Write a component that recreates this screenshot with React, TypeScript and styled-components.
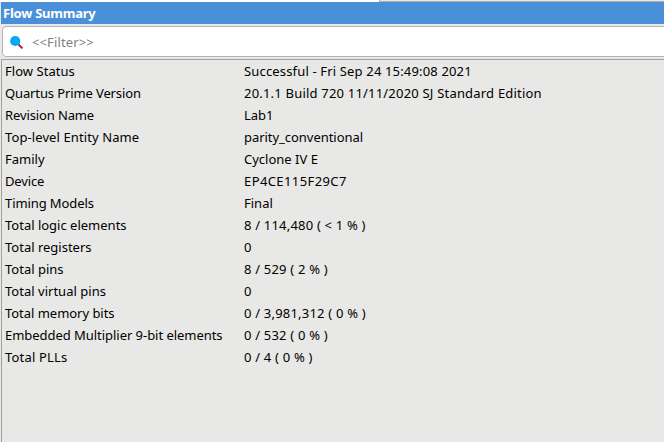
import React from "react";
import styled, { createGlobalStyle } from "styled-components";

const Global = createGlobalStyle`
  * { box-sizing: border-box; }
  body { margin: 0; overflow: hidden; background: #e8e8e6; font-family: "Noto Sans", sans-serif; font-size: 13px; color: #000; }
`;
const Panel = styled.main`
  display: flex; flex-direction: column; width: 664px; height: 442px; background: #e8e8e6; overflow: hidden;
`;
const TopEdge = styled.div`
  display: flex; justify-content: flex-end; height: 2px; flex: none; background: #fff;
`;
const TabEdge = styled.div`
  width: 285px; background: #e8e8e6; border: solid #b0b0ae; border-width: 0 0 1px 1px;
`;
const Title = styled.header`
  flex: none; height: 22px; margin-left: 1px; padding-left: 2px; background: #4a90d9;
  color: #fff; font-weight: 700; line-height: 22px; letter-spacing: -0.24px;
`;
const Filter = styled.label`
  display: flex; align-items: center; flex: none; height: 31px; margin: 2px -6px 0 2px; padding-left: 7px;
  background: #fff; border: 1px solid #b4b4b2; border-radius: 4px;
`;
const SearchIcon = styled.svg`flex: none; width: 14px; height: 15px;`;
const Placeholder = styled.span`margin-left: 8px; color: #7f7f7f; letter-spacing: 0.12px;`;
const Report = styled.section`
  flex: 1; margin: 2px 0 0 1px; border: solid #a0a0a0; border-width: 1px 0 0 1px;
`;
const Row = styled.div`
  display: grid; grid-template-columns: 239px 1fr; height: 22px; line-height: 22px; padding-left: 3px; white-space: pre;
`;
const Cell = styled.span<{ $tracking: number }>`letter-spacing: ${(p) => p.$tracking}px;`;

type Entry = [name: string, nameTracking: number, value: string, valueTracking: number];
const rows: Entry[] = [
  ["Flow Status", 0.04, "Successful - Fri Sep 24 15:49:08 2021", 0.16],
  ["Quartus Prime Version", -0.12, "20.1.1 Build 720 11/11/2020 SJ Standard Edition", 0.2],
  ["Revision Name", -0.12, "Lab1", 0],
  ["Top-level Entity Name", 0.1, "parity_conventional", -0.04],
  ["Family", 0, "Cyclone IV E", 0],
  ["Device", -0.15, "EP4CE115F29C7", 0.4],
  ["Timing Models", -0.1, "Final", 0],
  ["Total logic elements", 0, "8 / 114,480 ( < 1 % )", 0.2],
  ["Total registers", 0, "0", 0],
  ["Total pins", 0, "8 / 529 ( 2 % )", 0.2],
  ["Total virtual pins", 0.02, "0", 0],
  ["Total memory bits", -0.03, "0 / 3,981,312 ( 0 % )", 0.2],
  ["Embedded Multiplier 9-bit elements", -0.04, "0 / 532 ( 0 % )", 0.2],
  ["Total PLLs", 0.19, "0 / 4 ( 0 % )", 0.2],
];

export default function App() {
  return (
    <Panel>
      <Global />
      <TopEdge><TabEdge /></TopEdge>
      <Title>Flow Summary</Title>
      <Filter>
        <SearchIcon viewBox="0 0 14 15">
          <path d="M8 10l4.4 4.4" stroke="#a51c1c" strokeWidth="1.8" />
          <circle cx="5.2" cy="7" r="5.1" fill="#03a9f4" />
        </SearchIcon>
        <Placeholder>&lt;&lt;Filter&gt;&gt;</Placeholder>
      </Filter>
      <Report>
        {rows.map(([name, nameTracking, value, valueTracking]) => (
          <Row key={name}>
            <Cell $tracking={nameTracking}>{name}</Cell>
            <Cell $tracking={valueTracking}>{value}</Cell>
          </Row>
        ))}
      </Report>
    </Panel>
  );
}
